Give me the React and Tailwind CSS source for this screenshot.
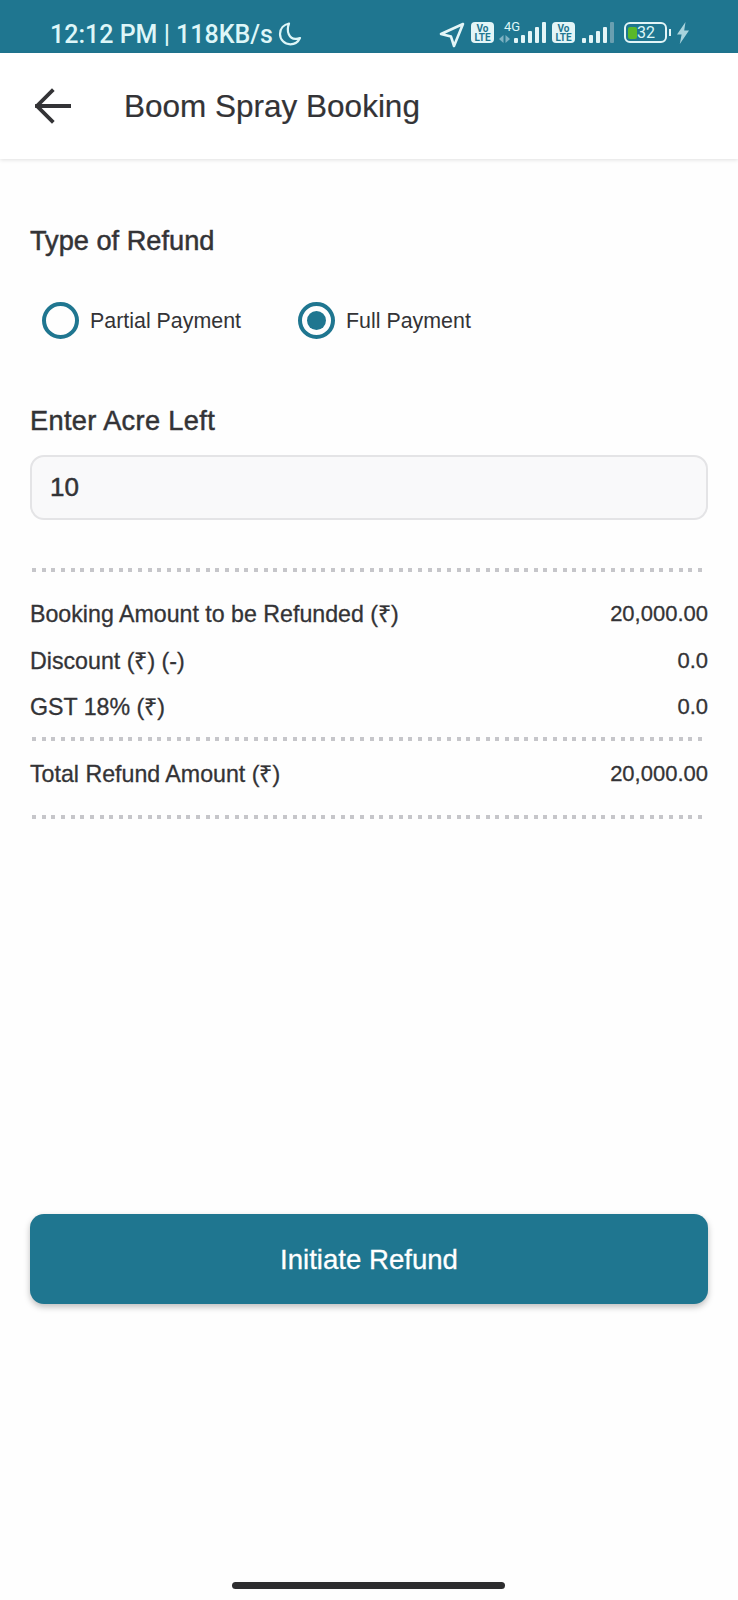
import React from "react";

const font = { fontFamily: '"Liberation Sans", Arial, sans-serif' };

function VoLte({ className = "" }) {
  return (
    <div className={`flex h-[21px] w-[23px] flex-col items-center justify-center rounded-[4px] bg-[#e3f5f7] font-['Roboto',sans-serif] text-[10px] leading-[9px] font-bold text-[#1f7690] ${className}`}>
      <span>Vo</span>
      <span>LTE</span>
    </div>
  );
}

function Signal({ last = "#e3f5f7" }) {
  const bars = [8, 12, 16, 21];
  return (
    <div className="flex h-[21px] items-end gap-[3px]">
      <div className="h-[5px] w-[4px] rounded-[1px] bg-[#e3f5f7]" />
      {bars.map((h, i) => (
        <div
          key={h}
          className="w-[4px] rounded-[1px]"
          style={{ height: h, background: i === 3 ? last : "#e3f5f7" }}
        />
      ))}
    </div>
  );
}

function StatusBar() {
  return (
    <div className="flex h-[53px] items-start bg-[#1f7690] pt-[22px] pr-[48px] pl-[50px] font-['Roboto',sans-serif] text-[#def6f8]">
      <span className="mt-[1px] text-[25px] leading-[24px] font-medium whitespace-nowrap">12:12 PM | 118KB/s</span>
      <svg className="ml-[4px] mt-[-1px]" width="26" height="26" viewBox="0 0 26 26" fill="none" stroke="#def6f8" strokeWidth="2.2" strokeLinejoin="round">
        <path d="M12 2.5C7 3.6 3 7.5 3 13c0 5.8 4.6 10.3 10.3 10.3 4.6 0 8-2.6 9.7-6.3-1.6.7-3 1-4.6.9-6 0-9.5-7.3-6.4-15.4Z" />
      </svg>
      <div className="ml-auto flex items-start">
        <svg width="26" height="26" viewBox="0 0 26 26" fill="none" stroke="#e3f5f7" strokeWidth="2.6" strokeLinejoin="round" className="mr-[6px]">
          <path d="M24 2 2 12l10 2.6L15 24 24 2Z" />
        </svg>
        <VoLte />
        <div className="relative ml-[5px] flex h-[21px] w-[47px] items-end justify-end">
          <span className="absolute top-[-2px] left-[5px] text-[13px] leading-[13px]">4G</span>
          <svg className="absolute bottom-0 left-0" width="11" height="8" viewBox="0 0 11 8" fill="#7fb2c2">
            <path d="M4.5 0v8L0 4ZM6.5 0v8L11 4Z" />
          </svg>
          <Signal />
        </div>
        <VoLte className="ml-[6px]" />
        <div className="ml-[7px]">
          <Signal last="#6a9fb0" />
        </div>
        <div className="ml-[10px] flex items-center">
          <div className="relative flex h-[21px] w-[43px] items-center rounded-[6px] border-2 border-[#e3f5f7] pl-[2px]">
            <div className="h-[12px] w-[9px] rounded-[2px] bg-[#5ab82a]" />
            <span className="absolute left-[11px] top-0 text-[16px] leading-[17px]">32</span>
          </div>
          <div className="ml-[2px] h-[7px] w-[2px] bg-[#e3f5f7]" />
        </div>
        <svg width="14" height="22" viewBox="0 0 14 22" className="ml-[5px]" fill="#a9d3dc">
          <path d="M9.5 0 1 12.5h4.6L3.8 22 13 8.6H8.2L9.5 0Z" />
        </svg>
      </div>
    </div>
  );
}

function Dots({ className = "" }) {
  return (
    <div className={`ml-[2px] h-[4px] w-[674px] bg-[repeating-linear-gradient(90deg,#c6c6ca_0_4px,transparent_4px_9.65px)] ${className}`} />
  );
}

function Radio({ label, checked, className = "" }) {
  return (
    <div className={`flex items-center ${className}`}>
      <div className="flex size-[37px] items-center justify-center rounded-full border-[4px] border-[#1f7690]">
        {checked && <div className="size-[19px] rounded-full bg-[#1f7690]" />}
      </div>
      <span className="mt-[1px] ml-[11px] text-[21.4px] leading-[28px] text-[#333336]">{label}</span>
    </div>
  );
}

function Row({ label, value, className = "" }) {
  return (
    <div className={`flex items-center justify-between leading-[26px] text-[#333336] [-webkit-text-stroke:0.3px_#333336] ${className}`}>
      <span className="text-[23.2px]">{label}</span>
      <span className="text-[22px]">{value}</span>
    </div>
  );
}

export default function App() {
  return (
    <div style={font} className="flex h-[1600px] w-[738px] flex-col overflow-hidden bg-[#fefefe]">
      <StatusBar />
      <div className="flex h-[106px] items-center bg-white pl-[35px] shadow-[0_1px_4px_rgba(0,0,0,0.12)]">
        <svg width="36" height="36" viewBox="0 0 36 36" fill="none" stroke="#333336" strokeWidth="3.8" strokeLinecap="square">
          <path d="M2 18h33M17 3 2 18l15 15" />
        </svg>
        <h1 className="ml-[53px] text-[31.5px] leading-[36px] text-[#333336] [-webkit-text-stroke:0.2px_#333336]">Boom Spray Booking</h1>
      </div>

      <div className="flex flex-1 flex-col px-[30px]">
        <h2 className="mt-[65px] text-[27.2px] leading-[34px] text-[#333336] [-webkit-text-stroke:0.5px_#333336]">Type of Refund</h2>
        <div className="mt-[44px] flex items-center pl-[12px]">
          <Radio label="Partial Payment" />
          <Radio label="Full Payment" checked className="ml-[57px]" />
        </div>
        <h2 className="mt-[65px] text-[27.2px] leading-[34px] tracking-[0.35px] text-[#333336] [-webkit-text-stroke:0.5px_#333336]">Enter Acre Left</h2>
        <div className="mt-[17px] flex h-[65px] items-center rounded-[14px] border-2 border-[#e4e4e6] bg-[#f9f9fa] pl-[18px] text-[26px] text-[#333336] [-webkit-text-stroke:0.5px_#333336]">
          10
        </div>

        <Dots className="mt-[48px]" />
        <Row className="mt-[29px]" label="Booking Amount to be Refunded (₹)" value="20,000.00" />
        <Row className="mt-[21px]" label="Discount (₹) (-)" value="0.0" />
        <Row className="mt-[20px]" label="GST 18% (₹)" value="0.0" />
        <Dots className="mt-[17px]" />
        <Row className="mt-[20px]" label="Total Refund Amount (₹)" value="20,000.00" />
        <Dots className="mt-[28px]" />

        <button className="mt-[395px] h-[90px] w-full rounded-[14px] bg-[#1f7690] pt-[2px] text-[27.6px] text-white [-webkit-text-stroke:0.3px_#ffffff] shadow-[0_3px_6px_rgba(0,0,0,0.25)]">
          Initiate Refund
        </button>

        <div className="mt-auto mb-[11px] ml-[202px] h-[7px] w-[273px] rounded-full bg-[#2d2d2f]" />
      </div>
    </div>
  );
}
